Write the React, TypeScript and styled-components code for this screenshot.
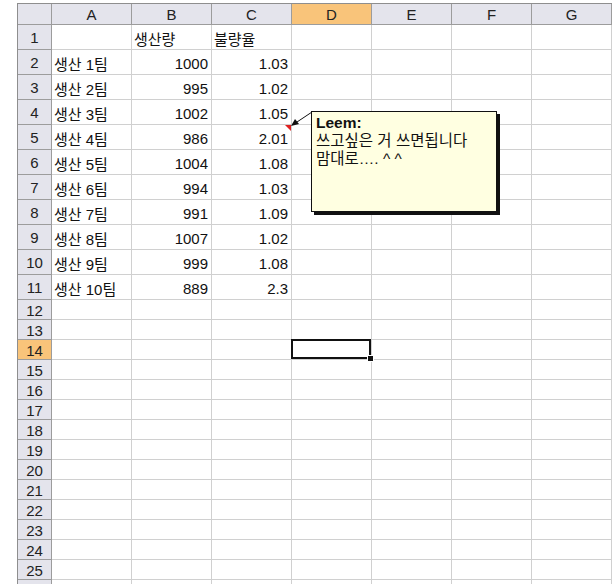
import React from 'react';
import styled, { createGlobalStyle, css } from 'styled-components';

const GlobalStyle = createGlobalStyle`
  html, body {
    margin: 0;
    padding: 0;
    background: #ffffff;
    height: 584px;
    overflow: hidden;
  }
  body {
    font-family: "Liberation Sans", "Noto Sans CJK KR", sans-serif;
  }
`

const Page = styled.div`
  padding: 3px 0 0 17px;
`

const Sheet = styled.div`
  position: relative;
  display: grid;
  grid-template-columns: 34px repeat(7, 80px);
  grid-template-rows: 21px repeat(11, 25px) repeat(15, 20px);
  border-left: 1px solid #8e8e8e;
  border-top: 1px solid #8e8e8e;
  width: max-content;
`

const HeadCell = styled.div<{ $active?: boolean }>`
  box-sizing: border-box;
  display: flex;
  align-items: center;
  justify-content: center;
  padding-top: 1px;
  background: ${p => (p.$active ? '#f9c47a' : '#e4e4ec')};
  border-right: 1px solid #9c9c9c;
  border-bottom: 1px solid #9c9c9c;
  font-size: 15px;
  color: #222;
`

const Corner = styled(HeadCell)`
  background: #e4e4ec;
`

const Cell = styled.div<{ $num?: boolean; $note?: boolean; $selected?: boolean }>`
  position: relative;
  box-sizing: border-box;
  display: flex;
  align-items: center;
  justify-content: ${p => (p.$num ? 'flex-end' : 'flex-start')};
  padding: 2px 3px 0 2px;
  border-right: 1px solid #d0d0d0;
  border-bottom: 1px solid #d0d0d0;
  font-size: 15px;
  color: #111;
  white-space: nowrap;
  ${p =>
    p.$note &&
    css`
      &::after {
        content: '';
        position: absolute;
        top: 0;
        right: 0;
        border-top: 6px solid #e02020;
        border-left: 6px solid transparent;
      }
    `}
  ${p =>
    p.$selected &&
    css`
      &::before {
        content: '';
        position: absolute;
        inset: -1px 0 0 -1px;
        border: 2px solid #111;
        z-index: 2;
      }
      &::after {
        content: '';
        position: absolute;
        right: -3px;
        bottom: -3px;
        width: 5px;
        height: 5px;
        background: #111;
        border: 1px solid #fff;
        z-index: 3;
      }
    `}
`

const Note = styled.div`
  position: absolute;
  left: 293px;
  top: 107px;
  width: 186px;
  height: 101px;
  box-sizing: border-box;
  background: #ffffe1;
  border: 1px solid #111;
  box-shadow: 3px 3px 0 #111;
  padding: 2px 4px;
  font-size: 15.5px;
  line-height: 18px;
  color: #111;
  z-index: 4;
`

const NoteAuthor = styled.div`
  font-weight: bold;
`

const Pointer = styled.svg`
  position: absolute;
  left: 270px;
  top: 104px;
  z-index: 5;
  overflow: visible;
`

const cols = ['A', 'B', 'C', 'D', 'E', 'F', 'G']

type Row = { a: string; b: string; c: string }

const data: Row[] = [
  { a: '', b: '생산량', c: '불량율' },
  { a: '생산 1팀', b: '1000', c: '1.03' },
  { a: '생산 2팀', b: '995', c: '1.02' },
  { a: '생산 3팀', b: '1002', c: '1.05' },
  { a: '생산 4팀', b: '986', c: '2.01' },
  { a: '생산 5팀', b: '1004', c: '1.08' },
  { a: '생산 6팀', b: '994', c: '1.03' },
  { a: '생산 7팀', b: '991', c: '1.09' },
  { a: '생산 8팀', b: '1007', c: '1.02' },
  { a: '생산 9팀', b: '999', c: '1.08' },
  { a: '생산 10팀', b: '889', c: '2.3' },
]

// row 26 is only a sliver at the bottom edge, so it gets no label
const ROWS = 26
const LABELLED_ROWS = 25
const SELECTED_ROW = 14
const SELECTED_COL = 'D'
const NOTE_ROW = 5

const App = () => {
  const rows = Array.from({ length: ROWS }, (_, i) => i + 1)

  return (
    <Page>
      <GlobalStyle />
      <Sheet>
        <Corner />
        {cols.map(c => (
          <HeadCell key={c} $active={c === SELECTED_COL}>{c}</HeadCell>
        ))}
        {rows.map(r => {
          const row = data[r - 1]
          return (
            <React.Fragment key={r}>
              <HeadCell $active={r === SELECTED_ROW}>{r <= LABELLED_ROWS ? r : ''}</HeadCell>
              {cols.map(c => {
                let text = ''
                let num = false
                if (row && c === 'A') text = row.a
                if (row && c === 'B') { text = row.b; num = r > 1 }
                if (row && c === 'C') { text = row.c; num = r > 1 }
                return (
                  <Cell
                    key={c}
                    $num={num}
                    $note={r === NOTE_ROW && c === 'C'}
                    $selected={r === SELECTED_ROW && c === SELECTED_COL}
                  >
                    {text}
                  </Cell>
                )
              })}
            </React.Fragment>
          )
        })}
        <Pointer width="30" height="20">
          <line x1="24" y1="4" x2="6" y2="16" stroke="#111" strokeWidth="1" />
          <polygon points="3,18 7,11 11,16" fill="#111" />
        </Pointer>
        <Note>
          <NoteAuthor>Leem:</NoteAuthor>
          <div>쓰고싶은 거 쓰면됩니다</div>
          <div>맘대로…. ^ ^</div>
        </Note>
      </Sheet>
    </Page>
  )
}

export default App
